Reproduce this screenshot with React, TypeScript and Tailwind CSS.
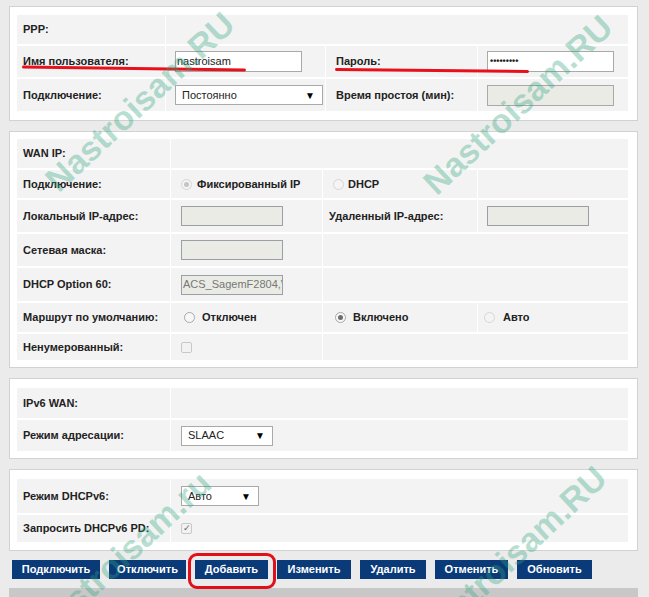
import React from "react";

function Radio({ checked, faint }: { checked?: boolean; faint?: boolean }) {
	return (
		<span
			className={`inline-flex h-[11px] w-[11px] shrink-0 items-center justify-center rounded-full border ${
				faint ? "border-[#d6d6d6] bg-[#f4f4f4]" : "border-[#a8a8a8] bg-[#f7f7f7]"
			}`}
		>
			{checked && (
				<span
					className={`h-[5px] w-[5px] rounded-full ${faint ? "bg-[#c4c4c4]" : "bg-[#6e6e6e]"}`}
				/>
			)}
		</span>
	);
}

function Check({ checked }: { checked?: boolean }) {
	return (
		<span className="inline-flex h-[11px] w-[11px] items-center justify-center rounded-[2px] border border-[#c8c8c8] bg-[#f2f2f2] text-[9px] leading-none text-[#666]">
			{checked ? "✓" : ""}
		</span>
	);
}

function Select({ value, w }: { value: string; w: string }) {
	return (
		<div
			className={`flex h-[20px] items-center justify-between border border-[#a9a9a9] bg-white pl-[6px] pr-[7px] text-[11px] text-[#222] ${w}`}
		>
			<span>{value}</span>
			<span className="text-[10px] text-black">▼</span>
		</div>
	);
}

function Label({ children }: { children: React.ReactNode }) {
	return <span className="whitespace-nowrap text-[11px] font-bold text-[#222]">{children}</span>;
}

const buttons = [
	{ t: "Подключить", w: "w-[88px]" },
	{ t: "Отключить", w: "w-[77px]" },
	{ t: "Добавить", w: "w-[73px]" },
	{ t: "Изменить", w: "w-[74px]" },
	{ t: "Удалить", w: "w-[66px]" },
	{ t: "Отменить", w: "w-[73px]" },
	{ t: "Обновить", w: "w-[75px]" },
];

const marks = [
	{ t: "Nastroisam.RU", c: "left-[140px] top-[102px]" },
	{ t: "Nastroisam.RU", c: "left-[518px] top-[105px]" },
	{ t: "Nastroisam.ru", c: "left-[122px] top-[556px]" },
	{ t: "Nastroisam.RU", c: "left-[512px] top-[556px]" },
];

export default function App() {
	return (
		<div className="relative h-[597px] w-[649px] overflow-hidden bg-[#ebebeb] pl-[9px] pr-[11px] pt-[6px] font-['Liberation_Sans',Arial,sans-serif]">
			{/* PPP */}
			<div className="border border-[#d2d2d2] bg-white pb-[9px] pl-[7px] pr-[9px] pt-[8px]">
				<div className="bg-[#f3f3f3]">
					<div className="flex h-[29px]">
						<div className="flex w-[148px] items-center pl-[6px]">
							<Label>PPP:</Label>
						</div>
						<div className="flex-1 border-l border-white" />
					</div>
					<div className="flex h-[33px] border-t-2 border-white">
						<div className="flex w-[148px] items-center pl-[6px]">
							<Label>Имя пользователя:</Label>
						</div>
						<div className="flex w-[160px] items-center border-l border-white pl-[9px]">
							<div className="flex h-[21px] w-[127px] items-center border border-[#a9a9a9] bg-white pl-[1px] text-[11px] text-[#222]">
								nastroisam
							</div>
						</div>
						<div className="flex w-[152px] items-center border-l border-white pl-[10px]">
							<Label>Пароль:</Label>
						</div>
						<div className="flex flex-1 items-center border-l border-white pl-[9px]">
							<div className="flex h-[21px] w-[127px] items-center border border-[#a9a9a9] bg-white pl-[2px] text-[9px] font-bold text-[#222]">
								•••••••••
							</div>
						</div>
					</div>
					<div className="flex h-[34px] border-t-2 border-white">
						<div className="flex w-[148px] items-center pl-[6px]">
							<Label>Подключение:</Label>
						</div>
						<div className="flex w-[160px] items-center border-l border-white pl-[9px]">
							<Select value="Постоянно" w="w-[148px]" />
						</div>
						<div className="flex w-[152px] items-center border-l border-white pl-[10px]">
							<Label>Время простоя (мин):</Label>
						</div>
						<div className="flex flex-1 items-center border-l border-white pl-[9px]">
							<div className="h-[21px] w-[127px] border border-[#a9a9a9] bg-[#ebebe6]" />
						</div>
					</div>
				</div>
			</div>

			{/* WAN IP */}
			<div className="mt-[10px] border border-[#d2d2d2] bg-white pb-[7px] pl-[7px] pr-[9px] pt-[7px]">
				<div className="bg-[#f3f3f3]">
					<div className="flex h-[29px]">
						<div className="flex w-[153px] items-center pl-[6px]">
							<Label>WAN IP:</Label>
						</div>
						<div className="flex-1 border-l border-white" />
					</div>
					<div className="flex h-[30px] border-t-2 border-white">
						<div className="flex w-[153px] items-center pl-[6px]">
							<Label>Подключение:</Label>
						</div>
						<div className="flex w-[152px] items-center gap-[5px] border-l border-white pl-[10px]">
							<Radio checked faint />
							<Label>Фиксированный IP</Label>
						</div>
						<div className="flex w-[155px] items-center gap-[4px] border-l border-white pl-[10px]">
							<Radio faint />
							<Label>DHCP</Label>
						</div>
						<div className="flex-1 border-l border-white" />
					</div>
					<div className="flex h-[34px] border-t-2 border-white">
						<div className="flex w-[153px] items-center pl-[6px]">
							<Label>Локальный IP-адрес:</Label>
						</div>
						<div className="flex w-[152px] items-center border-l border-white pl-[10px]">
							<div className="h-[20px] w-[102px] border border-[#9aa0a8] bg-[#ebebe6]" />
						</div>
						<div className="flex w-[155px] items-center border-l border-white pl-[6px]">
							<Label>Удаленный IP-адрес:</Label>
						</div>
						<div className="flex flex-1 items-center border-l border-white pl-[9px]">
							<div className="h-[20px] w-[102px] border border-[#9aa0a8] bg-[#ebebe6]" />
						</div>
					</div>
					<div className="flex h-[34px] border-t-2 border-white">
						<div className="flex w-[153px] items-center pl-[6px]">
							<Label>Сетевая маска:</Label>
						</div>
						<div className="flex w-[152px] items-center border-l border-white pl-[10px]">
							<div className="h-[20px] w-[102px] border border-[#9aa0a8] bg-[#ebebe6]" />
						</div>
						<div className="flex-1 border-l border-white" />
					</div>
					<div className="flex h-[35px] border-t-2 border-white">
						<div className="flex w-[153px] items-center pl-[6px]">
							<Label>DHCP Option 60:</Label>
						</div>
						<div className="flex w-[152px] items-center border-l border-white pl-[10px]">
							<div className="flex h-[20px] w-[102px] items-center overflow-hidden whitespace-nowrap border border-[#9aa0a8] bg-[#ebebe6] pl-[1px] text-[11px] text-[#777]">
								ACS_SagemF2804,V
							</div>
						</div>
						<div className="flex-1 border-l border-white" />
					</div>
					<div className="flex h-[31px] border-t-2 border-white">
						<div className="flex w-[153px] items-center pl-[6px]">
							<Label>Маршрут по умолчанию:</Label>
						</div>
						<div className="flex w-[152px] items-center gap-[7px] border-l border-white pl-[13px]">
							<Radio />
							<Label>Отключен</Label>
						</div>
						<div className="flex w-[155px] items-center gap-[7px] border-l border-white pl-[12px]">
							<Radio checked />
							<Label>Включено</Label>
						</div>
						<div className="flex flex-1 items-center gap-[8px] border-l border-white pl-[6px]">
							<Radio faint />
							<Label>Авто</Label>
						</div>
					</div>
					<div className="flex h-[28px] border-t-2 border-white">
						<div className="flex w-[153px] items-center pl-[6px]">
							<Label>Ненумерованный:</Label>
						</div>
						<div className="flex w-[152px] items-center border-l border-white pl-[10px]">
							<Check />
						</div>
						<div className="flex-1 border-l border-white" />
					</div>
				</div>
			</div>

			{/* IPv6 WAN */}
			<div className="mt-[10px] border border-[#d2d2d2] bg-white pb-[7px] pl-[7px] pr-[9px] pt-[9px]">
				<div className="bg-[#f3f3f3]">
					<div className="flex h-[30px]">
						<div className="flex w-[153px] items-center pl-[6px]">
							<Label>IPv6 WAN:</Label>
						</div>
						<div className="flex-1 border-l border-white" />
					</div>
					<div className="flex h-[33px] border-t-2 border-white">
						<div className="flex w-[153px] items-center pl-[6px]">
							<Label>Режим адресации:</Label>
						</div>
						<div className="flex flex-1 items-center border-l border-white pl-[10px]">
							<Select value="SLAAC" w="w-[92px]" />
						</div>
					</div>
				</div>
			</div>

			{/* DHCPv6 */}
			<div className="mt-[10px] border border-[#d2d2d2] bg-white pb-[8px] pl-[7px] pr-[9px] pt-[9px]">
				<div className="bg-[#f3f3f3]">
					<div className="flex h-[34px]">
						<div className="flex w-[153px] items-center pl-[6px]">
							<Label>Режим DHCPv6:</Label>
						</div>
						<div className="flex flex-1 items-center border-l border-white pl-[10px]">
							<Select value="Авто" w="w-[78px]" />
						</div>
					</div>
					<div className="flex h-[29px] border-t-2 border-white">
						<div className="flex w-[153px] items-center pl-[6px]">
							<Label>Запросить DHCPv6 PD:</Label>
						</div>
						<div className="flex flex-1 items-center border-l border-white pl-[10px]">
							<Check checked />
						</div>
					</div>
				</div>
			</div>

			{/* buttons */}
			<div className="mt-[9px] flex gap-[9px] pl-[3px]">
				{buttons.map((b) => (
					<div
						key={b.t}
						className={`flex h-[19px] items-center justify-center bg-[#0b3a78] text-[11px] font-bold text-white ${b.w}`}
					>
						{b.t}
					</div>
				))}
			</div>
			<div className="mt-[9px] h-[12px] bg-[#c8c8c8]" />

			{/* annotations */}
			<div className="pointer-events-none absolute left-[22px] top-[67px] h-[3px] w-[224px] rotate-[0.8deg] rounded-full bg-[#e8101a]" />
			<div className="pointer-events-none absolute left-[335px] top-[69px] h-[3px] w-[194px] rotate-[0.6deg] rounded-full bg-[#e8101a]" />
			<div className="pointer-events-none absolute left-[188px] top-[553px] h-[36px] w-[88px] rounded-[9px] border-[3px] border-[#e0101a]" />

			{marks.map((m, i) => (
				<div
					key={i}
					className={`pointer-events-none absolute -translate-x-1/2 -translate-y-1/2 -rotate-[43deg] whitespace-nowrap text-[34px] font-bold text-[#2fa57e]/35 ${m.c}`}
				>
					{m.t}
				</div>
			))}
		</div>
	);
}
